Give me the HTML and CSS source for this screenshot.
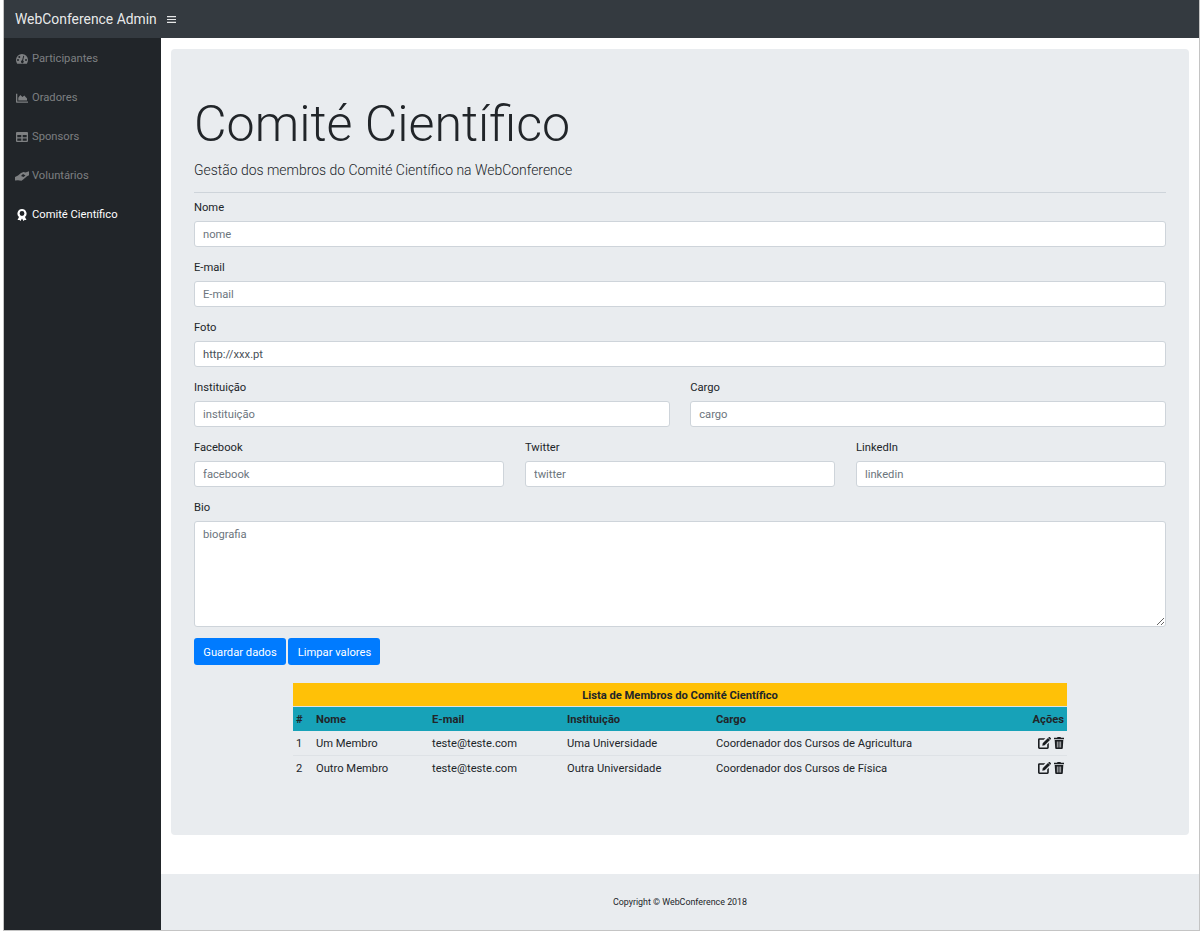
FILE: index.html
```html
<!doctype html>
<html>
<head>
	<meta http-equiv="content-type" content="text/html;charset=utf-8"/>
	<title>WebConference Admin</title>
	<link rel="stylesheet" href="styles.css">
</head>
<body>
	<div id="wrapper">
		<nav class="topbar">
			<span class="brand">WebConference Admin</span>
			<svg class="burger" viewBox="0 0 9 7"><path d="M0 0h9v1.200H0zM0 2.900h9v1.200H0zM0 5.800h9V7H0z"/></svg>
		</nav>
		<div class="main">
			<aside class="sidebar">
				<a class="side-link" href="#">
					<svg class="side-icon" viewBox="0 0 12 12"><path fill-rule="evenodd" d="M6 1a6 6 0 0 0-6 6c0 1.300.4 2.500 1 3.400.2.300.4.400.7.400h8.600c.3 0 .5-.1.700-.4.600-.9 1-2.100 1-3.400a6 6 0 0 0-6-6zM2 6a1 1 0 1 1 0 2 1 1 0 0 1 0-2zM3.300 2.900a1 1 0 1 1 0 2 1 1 0 0 1 0-2zM7.300 2.700l.9.300-1.100 4.500a1.400 1.400 0 1 1-1-.2zM10 6a1 1 0 1 1 0 2 1 1 0 0 1 0-2z"/></svg>
					Participantes
				</a>
				<a class="side-link" href="#">
					<svg class="side-icon" viewBox="0 0 12 12"><path d="M0 1.700h1.300v7.700H12v1.300H.6a.6.6 0 0 1-.6-.6zM2.300 8.500V5.800L4.300 3l2.200 2 1.800-1.500L11 6.500v2z"/></svg>
					Oradores
				</a>
				<a class="side-link" href="#">
					<svg class="side-icon" viewBox="0 0 12 12"><path fill-rule="evenodd" d="M1 1h10a1 1 0 0 1 1 1v8a1 1 0 0 1-1 1H1a1 1 0 0 1-1-1V2a1 1 0 0 1 1-1zM1.300 4v2.300h4V4zm5.400 0v2.300h4V4zM1.300 7.500v2.200h4V7.500zm5.400 0v2.200h4V7.500z"/></svg>
					Sponsors
				</a>
				<a class="side-link wide" href="#">
					<svg class="side-icon" viewBox="0 0 14 12"><path fill-rule="evenodd" d="M0 7l3-1.500L6 3l2.500-1 2 .5L14 1.300v4l-2 1-3.500 3-2 1.500-2-.2-1.500-.4L0 10.500zM6 6l2.500 1 2-1.500L8 4z"/></svg>
					Voluntários
				</a>
				<a class="side-link active" href="#">
					<svg class="side-icon" viewBox="0 0 12 12"><path fill-rule="evenodd" d="M6 0a4.500 4.500 0 0 1 3 7.900l1.500 3.100-2-.1-1 1L6 9.500 4.500 12l-1-1-2 .1L3 7.900A4.500 4.500 0 0 1 6 0zm0 2.100a2.400 2.400 0 1 0 0 4.800 2.400 2.400 0 0 0 0-4.800z"/></svg>
					Comité Científico
				</a>
			</aside>
			<div class="content">
				<div class="page">
					<div class="jumbo">
						<h1>Comité Científico</h1>
						<p class="lead">Gestão dos membros do Comité Científico na WebConference</p>
						<hr>
						<form>
							<div class="field">
								<label>Nome</label>
								<input type="text" placeholder="nome">
							</div>
							<div class="field">
								<label>E-mail</label>
								<input type="text" placeholder="E-mail">
							</div>
							<div class="field">
								<label>Foto</label>
								<input type="text" value="http://xxx.pt">
							</div>
							<div class="row two">
								<div class="field">
									<label>Instituição</label>
									<input type="text" placeholder="instituição">
								</div>
								<div class="field">
									<label>Cargo</label>
									<input type="text" placeholder="cargo">
								</div>
							</div>
							<div class="row three">
								<div class="field">
									<label>Facebook</label>
									<input type="text" placeholder="facebook">
								</div>
								<div class="field">
									<label>Twitter</label>
									<input type="text" placeholder="twitter">
								</div>
								<div class="field">
									<label>LinkedIn</label>
									<input type="text" placeholder="linkedin">
								</div>
							</div>
							<div class="field bio">
								<label>Bio</label>
								<textarea placeholder="biografia"></textarea>
							</div>
							<div class="buttons">
								<button type="button">Guardar dados</button>
								<button type="button">Limpar valores</button>
							</div>
						</form>
						<table class="members">
							<colgroup>
								<col class="c-id">
								<col class="c-name">
								<col class="c-mail">
								<col class="c-inst">
								<col class="c-role">
								<col>
							</colgroup>
							<thead>
								<tr class="title"><th colspan="6">Lista de Membros do Comité Científico</th></tr>
								<tr class="heads">
									<th>#</th>
									<th>Nome</th>
									<th>E-mail</th>
									<th>Instituição</th>
									<th>Cargo</th>
									<th class="c-act">Ações</th>
								</tr>
							</thead>
							<tbody>
								<tr>
									<td>1</td>
									<td>Um Membro</td>
									<td>teste@teste.com</td>
									<td>Uma Universidade</td>
									<td>Coordenador dos Cursos de Agricultura</td>
									<td class="c-act">
										<svg class="act" viewBox="0 0 13 12"><path fill-rule="evenodd" d="M1.400 1.200H7.300L5.700 2.800H1.700a.1.100 0 0 0-.1.100v7.400a.1.100 0 0 0 .1.100h7.400a.1.100 0 0 0 .1-.1V7.400l1.600-1.600v4.800A1.400 1.400 0 0 1 9.400 12H1.400A1.400 1.400 0 0 1 0 10.600V2.600a1.400 1.400 0 0 1 1.400-1.400z"/><path d="M10 1 12 3 6.700 8.300 4.300 8.700 4.700 6.300zM10.700.3c.4-.4.900-.4 1.300 0l.7.7c.4.400.4.900 0 1.300l-.4.400-2-2z"/></svg>
										<svg class="act trash" viewBox="0 0 10 12"><path fill-rule="evenodd" d="M3.500 0h3l.4.800H10v1.400H0V.8h3.100zM.7 3h8.600l-.5 8a1 1 0 0 1-1 1H2.200a1 1 0 0 1-1-1zM2.900 4.400v6h.7v-6zm1.800 0v6h.7v-6zm1.700 0v6h.7v-6z"/></svg>
									</td>
								</tr>
								<tr>
									<td>2</td>
									<td>Outro Membro</td>
									<td>teste@teste.com</td>
									<td>Outra Universidade</td>
									<td>Coordenador dos Cursos de Física</td>
									<td class="c-act">
										<svg class="act" viewBox="0 0 13 12"><path fill-rule="evenodd" d="M1.400 1.200H7.300L5.700 2.800H1.700a.1.100 0 0 0-.1.100v7.400a.1.100 0 0 0 .1.100h7.400a.1.100 0 0 0 .1-.1V7.400l1.600-1.600v4.800A1.400 1.400 0 0 1 9.400 12H1.400A1.400 1.400 0 0 1 0 10.600V2.600a1.400 1.400 0 0 1 1.400-1.400z"/><path d="M10 1 12 3 6.700 8.300 4.300 8.700 4.700 6.300zM10.700.3c.4-.4.900-.4 1.300 0l.7.7c.4.400.4.900 0 1.300l-.4.400-2-2z"/></svg>
										<svg class="act trash" viewBox="0 0 10 12"><path fill-rule="evenodd" d="M3.500 0h3l.4.800H10v1.400H0V.8h3.100zM.7 3h8.600l-.5 8a1 1 0 0 1-1 1H2.200a1 1 0 0 1-1-1zM2.900 4.400v6h.7v-6zm1.800 0v6h.7v-6zm1.700 0v6h.7v-6z"/></svg>
									</td>
								</tr>
							</tbody>
						</table>
					</div>
				</div>
				<footer class="foot">Copyright © WebConference 2018</footer>
			</div>
		</div>
	</div>
</body>
</html>
```

FILE: styles.css
```css
* {
    box-sizing: border-box;
}
body {
    margin: 0;
    background: #fff;
    font-family: Roboto, "Liberation Sans", sans-serif;
    font-size: 11.2px;
    line-height: 18px;
    color: #212529;
}

/* layouts */
#wrapper {
    width: 1197px;
    height: 931px;
    margin-left: 3px;
    border-left: 1px solid #c4c4c4;
    border-bottom: 1px solid #c4c4c4;
    border-right: 1px solid #c4c4c4;
    display: flex;
    flex-direction: column;
    overflow: hidden;
}
.main {
    flex: 1;
    display: flex;
    min-height: 0;
}
.content {
    flex: 1;
    display: flex;
    flex-direction: column;
}
.page {
    flex: 1;
    padding: 11px 10px 0;
}

/* top bar */
.topbar {
    height: 38px;
    flex: none;
    background: #343a40;
    display: flex;
    align-items: center;
    padding-left: 11px;
}
.brand {
    color: rgba(255, 255, 255, 0.9);
    font-size: 13.9px;
}
.burger {
    width: 9px;
    height: 7px;
    margin-left: 10px;
    fill: #e6e7e8;
}

/* side menu */
.sidebar {
    width: 157px;
    flex: none;
    background: #212529;
    padding-top: 1px;
}
.side-link {
    height: 39px;
    display: flex;
    align-items: center;
    padding-left: 12px;
    color: rgba(255, 255, 255, 0.42);
    text-decoration: none;
    font-size: 11.2px;
}
.side-link.active {
    color: #fff;
}
.side-icon {
    width: 12px;
    height: 12px;
    margin-right: 4px;
    fill: currentColor;
}
.side-link.wide {
    padding-left: 11px;
}
.side-link.wide .side-icon {
    width: 14px;
    margin-right: 3px;
}

/* jumbotron */
.jumbo {
    height: 786px;
    background: #e9ecef;
    border-radius: 4px;
    padding: 45px 23px 0;
}
h1 {
    margin: 0;
    font-size: 50.15px;
    font-weight: 300;
    line-height: 60px;
}
.lead {
    margin: 6px 0 0;
    font-size: 13.95px;
    font-weight: 300;
    line-height: 21px;
}
hr {
    margin: 11px 0 6px;
    border: 0;
    border-top: 1px solid #ced4da;
}

/* form */
.field {
    margin-bottom: 12px;
}
.field label {
    display: block;
    line-height: 18px;
    margin-bottom: 4px;
}
input, textarea {
    display: block;
    width: 100%;
    height: 26px;
    padding: 4px 8px;
    border: 1px solid #ced4da;
    border-radius: 3px;
    background: #fff;
    color: #495057;
    font-family: Roboto, "Liberation Sans", sans-serif;
    font-size: 11.2px;
    line-height: 16px;
}
textarea {
    height: 106px;
    padding-top: 5px;
}
input::placeholder, textarea::placeholder {
    color: #6c757d;
    opacity: 1;
}
.row {
    display: grid;
}
.row.two {
    grid-template-columns: 1fr 1fr;
    column-gap: 20.4px;
}
.row.three {
    grid-template-columns: 310px 310px 310px;
    column-gap: 21px;
}
.field.bio {
    margin-bottom: 11px;
}
.buttons {
    display: flex;
    gap: 2px;
}
button {
    width: 92px;
    height: 27px;
    padding: 1px 0 0;
    border: 0;
    border-radius: 3px;
    background: #007bff;
    color: #fff;
    font-family: Roboto, "Liberation Sans", sans-serif;
    font-size: 11.2px;
}
button + button {
    padding-left: 1px;
}

/* members table */
.members {
    width: 774px;
    margin: 18px auto 0;
    border-collapse: collapse;
    table-layout: fixed;
    font-size: 11.2px;
}
.members th, .members td {
    padding: 4px 3px 2px;
    line-height: 18px;
    text-align: left;
}
.members .title th {
    height: 23px;
    padding-bottom: 1px;
    background: #ffc107;
    text-align: center;
    border-bottom: 1px solid #dee2e6;
}
.members .heads th {
    height: 24px;
    background: #17a2b8;
}
.members td {
    height: 24px;
    border-bottom: 1px solid #dee2e6;
}
.members tbody tr:last-child td {
    border-bottom: 0;
}
.members .c-act {
    text-align: right;
}
.c-id { width: 20px; }
.c-name { width: 116px; }
.c-mail { width: 135px; }
.c-inst { width: 149px; }
.c-role { width: 300px; }
.act {
    width: 13px;
    height: 12px;
    fill: #1a1d20;
    vertical-align: -2px;
}
.act.trash {
    width: 10px;
}

/* footer */
.foot {
    height: 56px;
    flex: none;
    background: #e9ecef;
    display: flex;
    align-items: center;
    justify-content: center;
    font-size: 8.9px;
}
```
